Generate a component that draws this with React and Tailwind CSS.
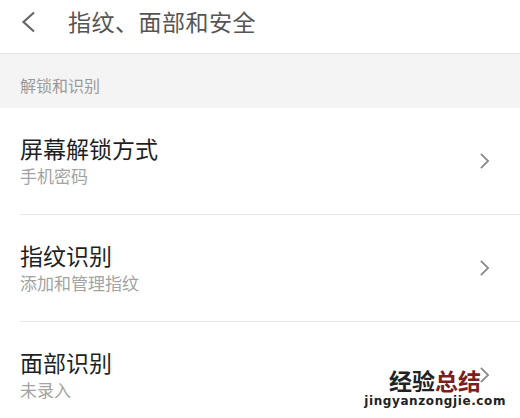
const FONT = "font-['Noto_Sans_CJK_SC','Noto_Sans',sans-serif]";

const items = [
  { title: '屏幕解锁方式', sub: '手机密码' },
  { title: '指纹识别', sub: '添加和管理指纹' },
  { title: '面部识别', sub: '未录入' },
];

function Chevron({ className }) {
  return (
    <svg className={className} viewBox="0 0 12 20" fill="none" stroke="currentColor" strokeWidth={2}>
      <path d="M2 2l8 8-8 8" />
    </svg>
  );
}

function Row({ item, last }) {
  return (
    <div className="pl-5">
      <div className={`flex items-center pr-[30px] ${last ? '' : 'border-b border-[#e6e6e6]'}`}>
        <div className="flex-1 pt-[27px] pb-[28px]">
          <div className="text-[23px] leading-[27px] text-[#1f1f1f]">{item.title}</div>
          <div className="mt-[4px] text-[17px] leading-[20px] text-[#a3a3a3]">{item.sub}</div>
        </div>
        <Chevron className="w-[11px] h-[18px] text-[#8a8a8a]" />
      </div>
    </div>
  );
}

export default function App() {
  return (
    <div className={`relative w-[520px] h-[418px] overflow-hidden bg-white ${FONT}`}>
      {/* Header */}
      <div className="flex items-center h-[54px] pb-[10px] border-b border-[#e2e2e2]">
        <svg className="ml-[21px] w-[15px] h-[22px] text-[#666]" viewBox="0 0 15 22" fill="none" stroke="currentColor" strokeWidth={2.2}>
          <path d="M13 1.5L2.5 11 13 20.5" />
        </svg>
        <div className="ml-[32px] text-[23px] leading-none text-[#555] tracking-[0.5px]">指纹、面部和安全</div>
      </div>

      {/* Section label */}
      <div className="h-[54px] bg-[#f4f4f4] flex items-center pt-[8px] pl-5">
        <span className="text-[16px] text-[#9a9a9a]">解锁和识别</span>
      </div>

      {items.map((item, i) => (
        <Row key={item.title} item={item} last={i === items.length - 1} />
      ))}

      {/* Watermark */}
      <div className="absolute right-[14px] bottom-[10px] flex flex-col items-center">
        <div className="text-[23px] leading-[22px] font-bold">
          <span className="text-[#222]">经验</span>
          <span className="text-[#7d1e1e]">总结</span>
        </div>
        <div className="mt-[4px] text-[12px] leading-[13px] font-bold text-[#222] font-['DejaVu_Sans',sans-serif] tracking-[0.6px]">
          jingyanzongjie.com
        </div>
      </div>
    </div>
  );
}
